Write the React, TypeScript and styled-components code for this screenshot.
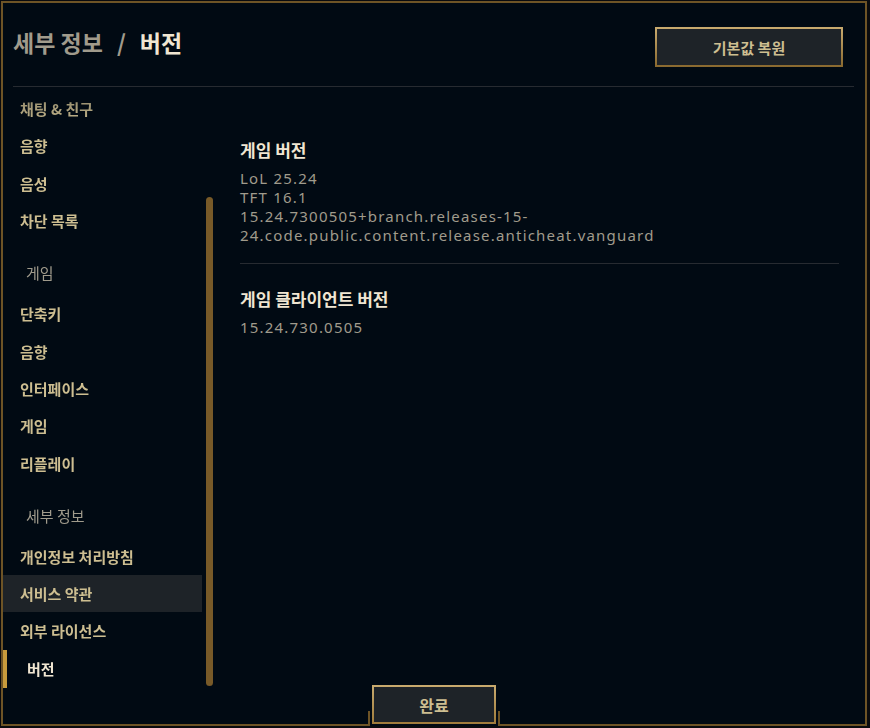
import React from "react";
import styled, { createGlobalStyle } from "styled-components";

const KR = `"Noto Sans CJK KR", "Noto Sans", sans-serif`;
const LATIN = `"Noto Sans", "Noto Sans CJK KR", sans-serif`;

type NavEntry =
  | { kind: "section"; label: string }
  | { kind: "item"; label: string; hovered?: boolean; selected?: boolean };

const nav: NavEntry[] = [
  { kind: "item", label: "채팅 & 친구" },
  { kind: "item", label: "음향" },
  { kind: "item", label: "음성" },
  { kind: "item", label: "차단 목록" },
  { kind: "section", label: "게임" },
  { kind: "item", label: "단축키" },
  { kind: "item", label: "음향" },
  { kind: "item", label: "인터페이스" },
  { kind: "item", label: "게임" },
  { kind: "item", label: "리플레이" },
  { kind: "section", label: "세부 정보" },
  { kind: "item", label: "개인정보 처리방침" },
  { kind: "item", label: "서비스 약관", hovered: true },
  { kind: "item", label: "외부 라이선스" },
  { kind: "item", label: "버전", selected: true },
];

const App: React.FC = () => {
  return (
    <>
      <GlobalStyle />
      <Frame>
        <Header>
          <Title>
            <Crumb>세부 정보</Crumb>
            <Slash>/</Slash>
            <Current>버전</Current>
          </Title>
          <GoldButton>기본값 복원</GoldButton>
        </Header>
        <HeaderRule />
        <Body>
          <NavList>
            {nav.map((entry, i) =>
              entry.kind === "section" ? (
                <SectionLabel key={i}>{entry.label}</SectionLabel>
              ) : (
                <NavItem
                  key={i}
                  $hovered={entry.hovered}
                  $selected={entry.selected}
                >
                  {entry.label}
                </NavItem>
              )
            )}
          </NavList>
          <ScrollTrack>
            <ScrollThumb />
          </ScrollTrack>
          <Content>
            <Block>
              <BlockTitle>게임 버전</BlockTitle>
              <Value>LoL 25.24</Value>
              <Value>TFT 16.1</Value>
              <Value>
                15.24.7300505+branch.releases-15-24.code.public.content.release.anticheat.vanguard
              </Value>
            </Block>
            <ContentRule />
            <Block>
              <BlockTitle>게임 클라이언트 버전</BlockTitle>
              <Value>15.24.730.0505</Value>
            </Block>
          </Content>
        </Body>
        <Footer>
          <Notch />
          <DoneButton>완료</DoneButton>
        </Footer>
      </Frame>
    </>
  );
};

export default App;

const GlobalStyle = createGlobalStyle`
  html, body {
    margin: 0;
    padding: 0;
    background: #0a0b0e;
  }
  * {
    box-sizing: border-box;
  }
`;

const Frame = styled.div`
  position: relative;
  margin: 1px 0 0 1px;
  width: 866px;
  height: 725px;
  border: 2px solid #6e5426;
  background: #010a13;
  display: flex;
  flex-direction: column;
  font-family: ${KR};
`;

const Header = styled.header`
  height: 83px;
  padding: 24px 22px 0 10px;
  display: flex;
  justify-content: space-between;
  align-items: flex-start;
`;

const Title = styled.h1`
  margin: 0;
  font-size: 23px;
  line-height: 30px;
  font-weight: 700;
  font-family: ${KR};
`;

const Crumb = styled.span`
  color: #a09b8c;
`;

const Slash = styled.span`
  color: #a09b8c;
  padding: 0 14px;
`;

const Current = styled.span`
  color: #f0e6d2;
`;

const GoldButton = styled.button`
  width: 188px;
  height: 40px;
  background: #1e2328;
  border: 2px solid;
  border-image: linear-gradient(to bottom, #c8aa6e, #8a6a30) 1;
  color: #cdbe91;
  font-family: ${KR};
  font-size: 15px;
  font-weight: 700;
  cursor: pointer;
`;

const HeaderRule = styled.div`
  height: 1px;
  margin: 0 11px 0 10px;
  background: #272b31;
`;

const Body = styled.div`
  flex: 1;
  min-height: 0;
  display: grid;
  grid-template-columns: 199px 12px 1fr;
  overflow: hidden;
`;

const NavList = styled.nav`
  padding-top: 3px;
  display: flex;
  flex-direction: column;
  mask-image: linear-gradient(to bottom, rgba(0, 0, 0, 0.6) 0px, #000 40px);
`;

const NavItem = styled.div<{ $hovered?: boolean; $selected?: boolean }>`
  flex: none;
  height: ${({ $selected }) => ($selected ? 38 : 37.3)}px;
  display: flex;
  align-items: center;
  padding-left: ${({ $selected }) => ($selected ? 20 : 17)}px;
  border-left: ${({ $selected }) => ($selected ? "4px solid #c89b3c" : "none")};
  background: ${({ $hovered }) => ($hovered ? "#1e2328" : "transparent")};
  color: ${({ $selected }) => ($selected ? "#f0e6d2" : "#cdbe91")};
  font-size: 15px;
  font-weight: 700;
  white-space: nowrap;
  cursor: pointer;
`;

const SectionLabel = styled.div`
  flex: none;
  padding: 23px 0 12px 23px;
  line-height: 21px;
  color: #a09b8c;
  font-size: 15px;
  font-weight: 400;
`;

const ScrollTrack = styled.div`
  padding-left: 4px;
`;

const ScrollThumb = styled.div`
  width: 7px;
  height: 489px;
  margin-top: 110px;
  border-radius: 4px;
  background: #785a28;
`;

const Content = styled.section`
  padding: 51px 26px 0 26px;
`;

const Block = styled.div`
  display: flex;
  flex-direction: column;
`;

const BlockTitle = styled.h2`
  margin: 0 0 7px;
  font-family: ${KR};
  font-size: 17px;
  line-height: 24px;
  font-weight: 700;
  color: #f0e6d2;
`;

const Value = styled.div`
  font-family: ${LATIN};
  font-size: 15px;
  line-height: 19px;
  letter-spacing: 1.2px;
  color: #a09b8c;
`;

const ContentRule = styled.div`
  height: 1px;
  margin: 18px 0 23px;
  background: #272b31;
`;

const Footer = styled.div`
  position: absolute;
  left: 50%;
  bottom: -2px;
  transform: translateX(-50%);
  width: 132px;
  height: 41px;
  display: flex;
  justify-content: center;
`;

const Notch = styled.div`
  position: absolute;
  left: 0;
  right: 0;
  bottom: 0;
  height: 15px;
  background: #010a13;
  border-left: 2px solid #6e5426;
  border-right: 2px solid #6e5426;
`;

const DoneButton = styled.button`
  position: relative;
  width: 124px;
  height: 39px;
  background: #1e2328;
  border: 2px solid;
  border-image: linear-gradient(to bottom, #c8aa6e, #a07c3c) 1;
  color: #cdbe91;
  font-family: ${KR};
  font-size: 16px;
  font-weight: 700;
  cursor: pointer;
`;
